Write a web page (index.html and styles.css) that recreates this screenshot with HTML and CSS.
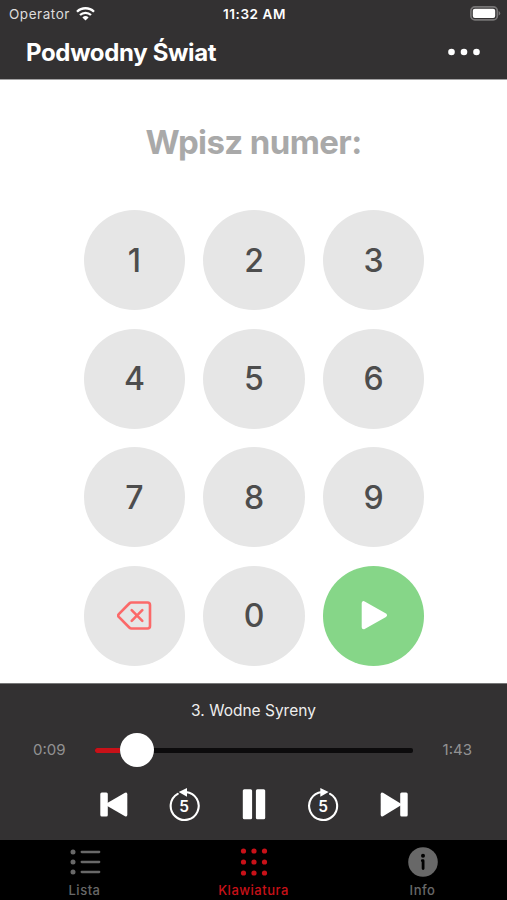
FILE: index.html
```html
<!DOCTYPE html>
<html lang="pl">
    <head>
        <meta charset="UTF-8">
        <meta name="viewport" content="width=device-width, initial-scale=1.0">
        <title>Podwodny Świat</title>
        <link rel="stylesheet" href="styles.css">
    </head>

    <body>
        <header>
            <div class="status-bar">
                <div class="carrier">
                    <span>Operator</span>
                    <svg width="19" height="14" viewBox="0 0 19 14" fill="none" stroke="#fff" stroke-width="2.3">
                        <path d="M1 4.7a12.2 12.2 0 0 1 17 0"/>
                        <path d="M4 8a8 8 0 0 1 11 0"/>
                        <path d="M9.5 13.5L6.4 10.4a4.5 4.5 0 0 1 6.2 0z" fill="#fff" stroke="none"/>
                    </svg>
                </div>
                <span class="clock">11:32 AM</span>
                <svg class="battery" width="31" height="15" viewBox="0 0 31 15">
                    <rect x="0.9" y="0.9" width="26.4" height="13" rx="4" fill="#333132" stroke="#777576" stroke-width="1.7"/>
                    <rect x="2.8" y="2.8" width="22.4" height="9.2" rx="2" fill="#fff"/>
                    <path d="M28.7 5v4.6q1.5-.7 1.5-2.3T28.7 5z" fill="#777576"/>
                </svg>
            </div>
            <div class="title-bar">
                <h1>Podwodny Świat</h1>
                <svg class="menu" width="32" height="8" viewBox="0 0 32 8" fill="#fff">
                    <circle cx="3.5" cy="4" r="3.3"/>
                    <circle cx="16" cy="4" r="3.3"/>
                    <circle cx="28.5" cy="4" r="3.3"/>
                </svg>
            </div>
        </header>

        <main>
            <h2>Wpisz numer:</h2>
            <section class="keypad">
                <button class="key">1</button>
                <button class="key">2</button>
                <button class="key">3</button>
                <button class="key">4</button>
                <button class="key">5</button>
                <button class="key">6</button>
                <button class="key">7</button>
                <button class="key">8</button>
                <button class="key">9</button>
                <button class="key" aria-label="Usuń">
                    <svg width="36" height="32" viewBox="0 0 36 32" fill="none" stroke="#fb6969" stroke-width="2.6" stroke-linejoin="round" stroke-linecap="round">
                        <path d="M14.5 2.500h16q2.500 0 2.500 2.500v21q0 2.500-2.500 2.500h-16q-1.200 0-2.200-1L1.800 16.800q-1.200-1.300 0-2.600L12.300 3.500q1-1 2.200-1z"/>
                        <path d="M14.700 10.200l10.600 10.600M25.300 10.200L14.700 20.800"/>
                    </svg>
                </button>
                <button class="key">0</button>
                <button class="key play" aria-label="Odtwórz">
                    <svg width="28" height="32" viewBox="0 0 28 32" fill="#fff" stroke="#fff" stroke-width="4" stroke-linejoin="round">
                        <path d="M3.700 3.200v24L25 15.200z"/>
                    </svg>
                </button>
            </section>
        </main>

        <section class="player">
            <p class="track">3. Wodne Syreny</p>
            <div class="progress">
                <span class="time">0:09</span>
                <div class="slider">
                    <div class="played"></div>
                    <div class="thumb"></div>
                </div>
                <span class="time">1:43</span>
            </div>
            <div class="controls">
                <svg width="36" height="36" viewBox="0 0 36 36" fill="#fff">
                    <rect x="5.300" y="6.500" width="7.500" height="24" rx="1.500"/>
                    <path d="M11 18.500v-.8L30 6.800q2.300-1 2.300 1.400v20.600q0 2.400-2.300 1.400L11 19.300z"/>
                </svg>
                <svg width="36" height="36" viewBox="0 0 36 36">
                    <path d="M12.700 7.800A14 14 0 1 0 21 6" fill="none" stroke="#fff" stroke-width="2.100" stroke-linecap="round"/>
                    <path d="M13.700 6L22 1.900v8.800z" fill="#fff"/>
                    <text x="19.100" y="25.700" text-anchor="middle" class="skip">5</text>
                </svg>
                <svg width="36" height="36" viewBox="0 0 36 36" fill="#fff">
                    <rect x="6.800" y="3.300" width="9.300" height="30" rx="1.500"/>
                    <rect x="19.900" y="3.300" width="9.300" height="30" rx="1.500"/>
                </svg>
                <svg width="36" height="36" viewBox="0 0 36 36">
                    <path d="M24.100 7.800A14 14 0 1 1 15.800 6" fill="none" stroke="#fff" stroke-width="2.100" stroke-linecap="round"/>
                    <path d="M22.600 6L14.300 1.900v8.800z" fill="#fff"/>
                    <text x="17.200" y="25.700" text-anchor="middle" class="skip">5</text>
                </svg>
                <svg width="36" height="36" viewBox="0 0 36 36" fill="#fff">
                    <rect x="24.200" y="6.500" width="7.500" height="24" rx="1.500"/>
                    <path d="M25 18.500v-.8L7 6.800q-2.300-1-2.300 1.400v20.600q0 2.400 2.300 1.400l18-10.900z"/>
                </svg>
            </div>
        </section>

        <nav>
            <a class="tab">
                <svg width="32" height="32" viewBox="0 0 32 32" fill="#686868">
                    <circle cx="4" cy="6" r="2.500"/>
                    <circle cx="4" cy="16" r="2.500"/>
                    <circle cx="4" cy="26" r="2.500"/>
                    <path d="M12.700 6h17.500M12.700 16h17.500M12.700 26h17.500" stroke="#686868" stroke-width="2.300" stroke-linecap="round"/>
                </svg>
                <span>Lista</span>
            </a>
            <a class="tab active">
                <svg width="32" height="32" viewBox="0 0 32 32" fill="#c81118">
                    <circle cx="5.500" cy="5" r="2.600"/>
                    <circle cx="16" cy="5" r="2.600"/>
                    <circle cx="26.500" cy="5" r="2.600"/>
                    <circle cx="5.500" cy="16" r="2.600"/>
                    <circle cx="16" cy="16" r="2.600"/>
                    <circle cx="26.500" cy="16" r="2.600"/>
                    <circle cx="5.500" cy="27" r="2.600"/>
                    <circle cx="16" cy="27" r="2.600"/>
                    <circle cx="26.500" cy="27" r="2.600"/>
                </svg>
                <span>Klawiatura</span>
            </a>
            <a class="tab">
                <svg width="32" height="32" viewBox="0 0 32 32">
                    <circle cx="16" cy="16" r="14.800" fill="#686868"/>
                    <circle cx="16" cy="9.800" r="2" fill="#000"/>
                    <path d="M15.300 14.700h.8v7.800" fill="none" stroke="#000" stroke-width="2.800" stroke-linecap="round" stroke-linejoin="round"/>
                </svg>
                <span>Info</span>
            </a>
        </nav>
    </body>
</html>
```

FILE: styles.css
```css
* {
    box-sizing: border-box;
}

body {
    margin: 0;
    height: 900px;
    display: flex;
    flex-direction: column;
    background-color: white;
    font-family: Inter, "Liberation Sans", sans-serif;
    overflow: hidden;
}

svg {
    display: block;
    flex-shrink: 0;
}

header {
    height: 80px;
    background-color: #333132;
    color: white;
    border-bottom: 1px solid #a3a2a3;
}

.status-bar {
    display: grid;
    grid-template-columns: 1fr auto 1fr;
    align-items: center;
    height: 27px;
    padding: 0 6px 0 9px;
    font-size: 13.5px;
}

.carrier {
    display: flex;
    align-items: center;
    gap: 6px;
    color: #dddcdc;
    letter-spacing: 0.55px;
}

.clock {
    margin-right: 1px;
    font-weight: 600;
    letter-spacing: 0.6px;
}

.battery {
    justify-self: end;
}

.title-bar {
    display: flex;
    align-items: center;
    justify-content: space-between;
    height: 50px;
    padding: 0 27px 0 26px;
}

h1 {
    margin: 0;
    font-size: 24px;
    font-weight: 700;
    letter-spacing: -0.35px;
}

main {
    height: 603px;
    padding-top: 41px;
    text-align: center;
}

h2 {
    margin: 0 0 47px;
    height: 42px;
    line-height: 42px;
    font-size: 33px;
    font-weight: 700;
    letter-spacing: -0.6px;
    color: #a9a9a9;
}

.keypad {
    display: grid;
    grid-template-columns: repeat(3, 101.5px);
    grid-auto-rows: 100px;
    gap: 18.5px 18px;
    justify-content: center;
    padding-left: 1px;
}

.key {
    display: flex;
    align-items: center;
    justify-content: center;
    padding: 0;
    border: none;
    border-radius: 50%;
    background-color: #e6e6e6;
    color: #4d4d4d;
    font-family: inherit;
    font-size: 32px;
    font-weight: 500;
}

.play {
    background-color: #86d688;
}

.player {
    height: 157px;
    padding-top: 17px;
    background-color: #333132;
    border-top: 1px solid #777;
}

.track {
    margin: 0;
    height: 20px;
    line-height: 20px;
    font-size: 15.5px;
    color: #eee;
    text-align: center;
}

.progress {
    display: flex;
    align-items: center;
    justify-content: space-between;
    height: 34px;
    margin-top: 11px;
    padding: 0 35px 0 33px;
}

.time {
    font-size: 15px;
    color: #929192;
}

.slider {
    display: flex;
    align-items: center;
    width: 318px;
    height: 5px;
    margin-top: 3px;
    border-radius: 2px;
    background-color: #0c0b0c;
}

.played {
    width: 25px;
    height: 5px;
    border-radius: 2px 0 0 2px;
    background-color: #c81118;
}

.thumb {
    width: 34px;
    height: 34px;
    margin-bottom: 2px;
    border-radius: 50%;
    background-color: white;
}

.controls {
    display: flex;
    justify-content: space-between;
    padding: 0 95px;
    margin-top: 20px;
}

.skip {
    font-size: 15.5px;
    font-weight: 600;
    fill: white;
}

nav {
    display: grid;
    grid-template-columns: repeat(3, 1fr);
    height: 60px;
    background-color: black;
}

.tab {
    display: flex;
    flex-direction: column;
    align-items: center;
    padding-top: 6px;
    color: #686868;
    font-size: 13px;
    font-weight: 500;
    line-height: 16px;
    letter-spacing: 0.5px;
}

.tab span {
    margin-top: 4px;
}

.active {
    color: #c81118;
}
```
